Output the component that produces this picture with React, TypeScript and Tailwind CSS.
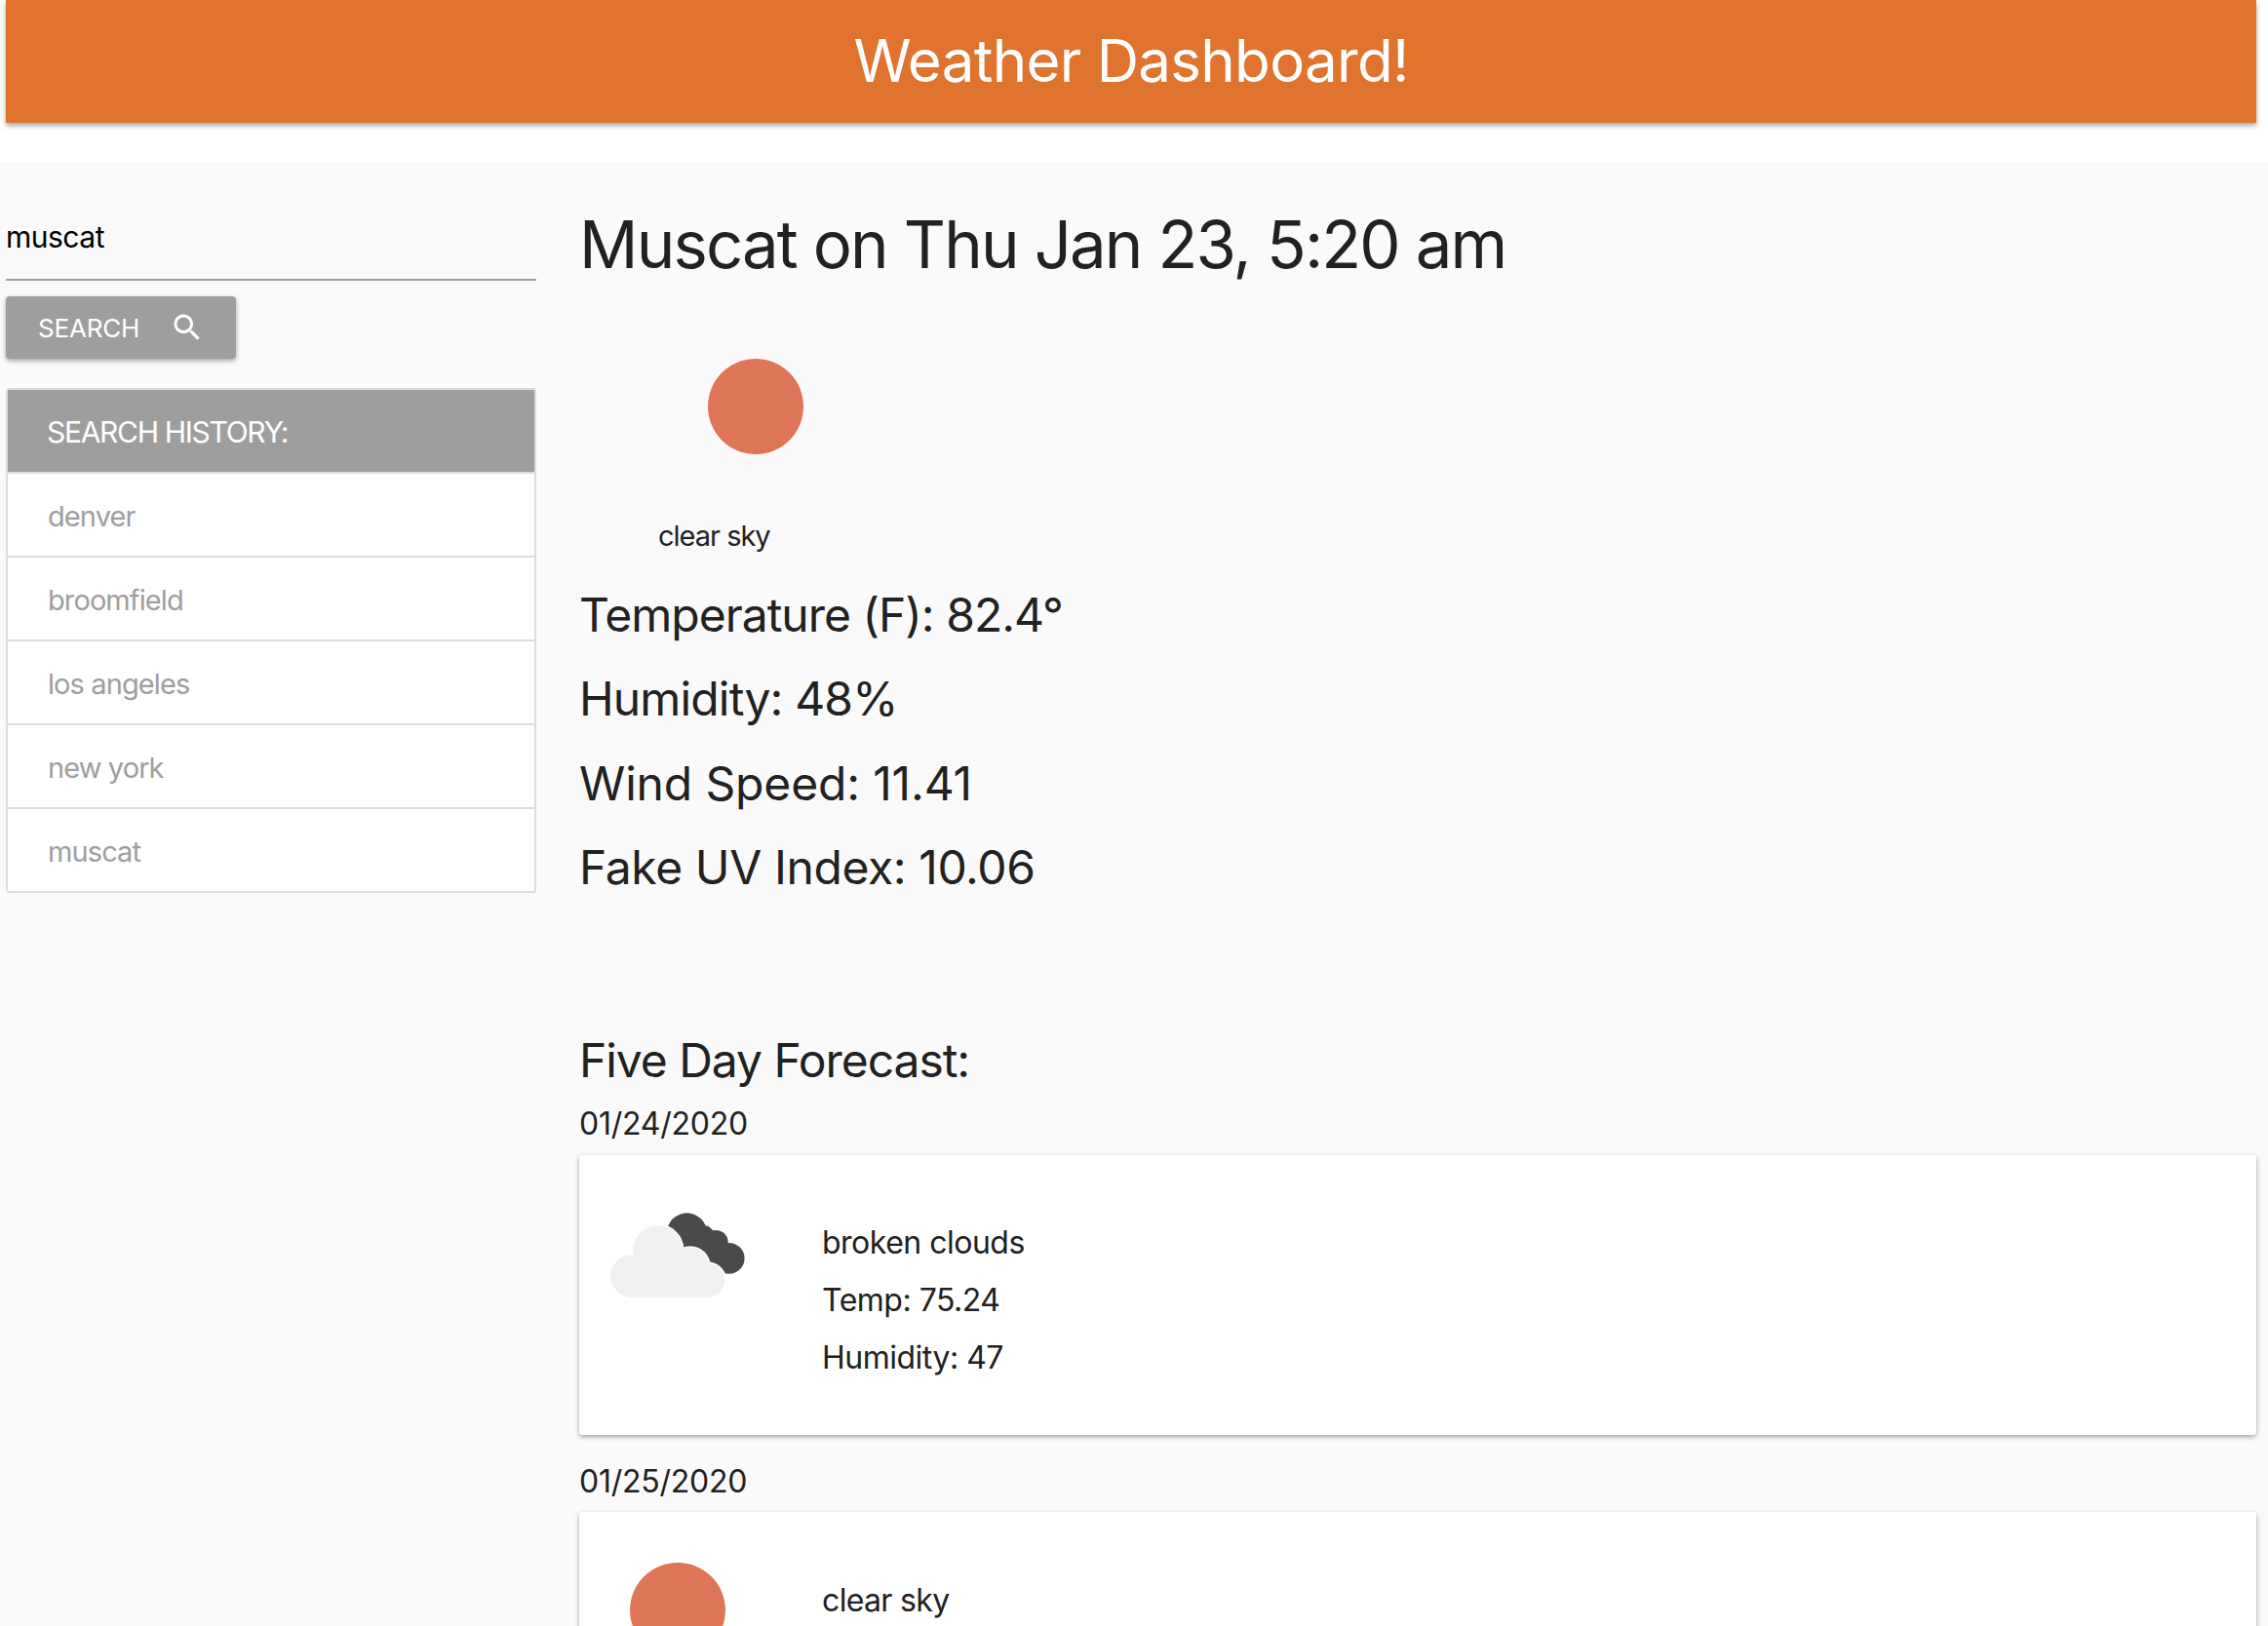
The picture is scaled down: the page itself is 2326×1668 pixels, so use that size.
import React from 'react';

const font = "font-['Inter','Liberation_Sans',sans-serif]";

const history = ['denver', 'broomfield', 'los angeles', 'new york', 'muscat'];

const Sun: React.FC = () => (
  <svg width="98" height="98" viewBox="0 0 98 98">
    <circle cx="49" cy="49" r="49" fill="#df7557" />
  </svg>
);

const Clouds: React.FC = () => (
  <svg width="143" height="93" viewBox="130 240 430 280">
    <g fill="#4a4a4c">
      <circle cx="375" cy="312" r="62" />
      <circle cx="465" cy="340" r="37" />
      <circle cx="505" cy="390" r="48" />
      <path d="M330 300 L440 290 L520 360 L490 435 L420 410 Z" />
    </g>
    <g fill="#f1f1ef" stroke="#ffffff" strokeWidth="10">
      <circle cx="285" cy="365" r="76" />
      <circle cx="205" cy="445" r="66" />
      <circle cx="385" cy="415" r="58" />
      <circle cx="440" cy="458" r="52" />
    </g>
    <g fill="#f1f1ef">
      <circle cx="285" cy="365" r="76" />
      <circle cx="205" cy="445" r="66" />
      <circle cx="385" cy="415" r="58" />
      <circle cx="440" cy="458" r="52" />
      <rect x="205" y="400" width="235" height="110" />
    </g>
  </svg>
);

const App: React.FC = () => {
  return (
    <div className={`${font} h-[1668px] overflow-hidden bg-white text-[#212121]`}>
      <header className="mx-[6px] w-[2308px] h-[126px] bg-[#e0732e] flex items-center justify-center pb-[2px] shadow-[0_3px_5px_rgba(0,0,0,0.35)]">
        <h1 className="text-[60px] leading-none text-white tracking-[-0.7px]">Weather Dashboard!</h1>
      </header>

      <main className="mt-[40px] h-[1502px] bg-[#fafafa] flex">
        <aside className="ml-[6px] w-[544px] shrink-0">
          <div className="h-[122px] border-b-2 border-[#9e9e9e] flex items-end pb-[25px]">
            <span className="text-[30px] leading-[36px] text-black tracking-[-0.5px]">muscat</span>
          </div>
          <button className="mt-[16px] w-[236px] h-[64px] rounded-[4px] bg-[#9e9e9e] text-white flex items-center pl-[33px] gap-[31px] shadow-[0_2px_5px_rgba(0,0,0,0.35)]">
            <span className="text-[26px] leading-none tracking-[-0.2px] pt-[2px]">SEARCH</span>
            <svg width="36" height="36" viewBox="0 0 24 24" fill="#ffffff">
              <path d="M15.5 14h-.79l-.28-.27C15.41 12.59 16 11.11 16 9.5 16 5.91 13.09 3 9.5 3S3 5.91 3 9.5 5.91 16 9.5 16c1.61 0 3.09-.59 4.23-1.57l.27.28v.79l5 4.99L20.49 19l-4.99-5zm-6 0C7.01 14 5 11.99 5 9.5S7.01 5 9.5 5 14 7.01 14 9.5 11.99 14 9.5 14z" />
            </svg>
          </button>
          <ul className="mt-[30px] border-2 border-[#dcdcdc] rounded-[3px] bg-white">
            <li className="h-[84px] bg-[#9e9e9e] text-white text-[30px] tracking-[-1.3px] flex items-center pl-[40px] pt-[2px]">SEARCH HISTORY:</li>
            {history.map(h => (
              <li key={h} className="h-[86px] border-t-2 border-[#dcdcdc] text-[#9e9e9e] text-[29px] tracking-[-0.9px] flex items-center pl-[41px] pt-[3px]">{h}</li>
            ))}
          </ul>
        </aside>

        <section className="ml-[44px] w-[1720px] shrink-0">
          <h2 className="mt-[43px] text-[67px] leading-[84px] tracking-[-1.86px]">Muscat on Thu Jan 23, 5:20 am</h2>

          <div className="mt-[75px] ml-[132px]"><Sun /></div>
          <p className="mt-[64px] ml-[81px] text-[29px] leading-[40px] tracking-[-1px]">clear sky</p>

          <div className="mt-[18px] text-[48px] leading-[86.4px]">
            <p className="tracking-[-1px]">Temperature (F): 82.4°</p>
            <p className="tracking-[-0.85px]">Humidity: 48%</p>
            <p className="tracking-[-0.15px]">Wind Speed: 11.41</p>
            <p className="tracking-[-0.4px]">Fake UV Index: 10.06</p>
          </div>

          <h3 className="mt-[124px] text-[48px] leading-[60px] tracking-[-1.05px]">Five Day Forecast:</h3>
          <p className="mt-[15px] text-[32px] leading-[40px] tracking-[-0.25px]">01/24/2020</p>

          <div className="mt-[12px] h-[287px] bg-white rounded-[3px] shadow-[0_2px_5px_rgba(0,0,0,0.35)] flex">
            <div className="w-[249px] shrink-0 pl-[29px] pt-[56px]"><Clouds /></div>
            <div className="pt-[60px] text-[32px] leading-[59px] tracking-[-0.5px]">
              <p>broken clouds</p>
              <p>Temp: 75.24</p>
              <p>Humidity: 47</p>
            </div>
          </div>

          <p className="mt-[28px] text-[32px] leading-[40px] tracking-[-0.25px]">01/25/2020</p>

          <div className="mt-[11px] h-[286px] bg-white rounded-[3px] shadow-[0_2px_5px_rgba(0,0,0,0.35)] flex">
            <div className="w-[249px] shrink-0 pl-[52px] pt-[52px]"><Sun /></div>
            <div className="pt-[61px] text-[32px] leading-[59px] tracking-[-0.65px]">
              <p>clear sky</p>
            </div>
          </div>
        </section>
      </main>
    </div>
  );
};

export default App;
